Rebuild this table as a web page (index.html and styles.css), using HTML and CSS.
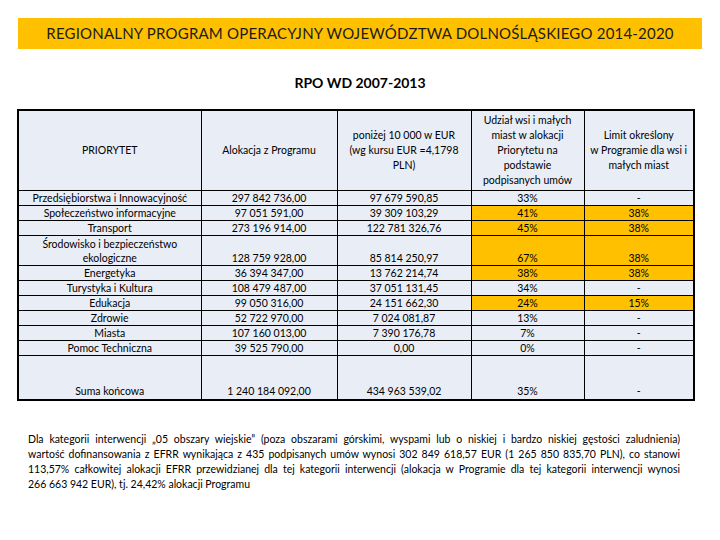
FILE: index.html
```html
<!DOCTYPE html>
<html lang="pl">
<head>
<meta charset="utf-8">
<link rel="stylesheet" href="styles.css">
</head>
<body>
<div class="page">
  <div class="banner">REGIONALNY PROGRAM OPERACYJNY WOJEWÓDZTWA DOLNOŚLĄSKIEGO 2014-2020</div>
  <div class="subtitle">RPO WD 2007-2013</div>
  <table class="data">
    <colgroup>
      <col class="c1"><col class="c2"><col class="c3"><col class="c4"><col class="c5">
    </colgroup>
    <thead>
      <tr class="head">
        <th>PRIORYTET</th>
        <th>Alokacja z Programu</th>
        <th>poniżej 10 000 w EUR<br>(wg kursu EUR =4,1798<br>PLN)</th>
        <th>Udział wsi i małych<br>miast w alokacji<br>Priorytetu na<br>podstawie<br>podpisanych umów</th>
        <th>Limit określony<br>w Programie dla wsi i<br>małych miast</th>
      </tr>
    </thead>
    <tbody>
      <tr><td>Przedsiębiorstwa i Innowacyjność</td><td>297 842 736,00</td><td>97 679 590,85</td><td>33%</td><td>-</td></tr>
      <tr><td>Społeczeństwo informacyjne</td><td>97 051 591,00</td><td>39 309 103,29</td><td class="hl">41%</td><td class="hl">38%</td></tr>
      <tr><td>Transport</td><td>273 196 914,00</td><td>122 781 326,76</td><td class="hl">45%</td><td class="hl">38%</td></tr>
      <tr class="tall"><td>Środowisko i bezpieczeństwo<br>ekologiczne</td><td>128 759 928,00</td><td>85 814 250,97</td><td class="hl">67%</td><td class="hl">38%</td></tr>
      <tr><td>Energetyka</td><td>36 394 347,00</td><td>13 762 214,74</td><td class="hl">38%</td><td class="hl">38%</td></tr>
      <tr><td>Turystyka i Kultura</td><td>108 479 487,00</td><td>37 051 131,45</td><td>34%</td><td>-</td></tr>
      <tr><td>Edukacja</td><td>99 050 316,00</td><td>24 151 662,30</td><td class="hl">24%</td><td class="hl">15%</td></tr>
      <tr><td>Zdrowie</td><td>52 722 970,00</td><td>7 024 081,87</td><td>13%</td><td>-</td></tr>
      <tr><td>Miasta</td><td>107 160 013,00</td><td>7 390 176,78</td><td>7%</td><td>-</td></tr>
      <tr class="last"><td>Pomoc Techniczna</td><td>39 525 790,00</td><td>0,00</td><td>0%</td><td>-</td></tr>
      <tr class="sum"><td>Suma końcowa</td><td>1 240 184 092,00</td><td>434 963 539,02</td><td>35%</td><td>-</td></tr>
    </tbody>
  </table>
  <div class="note">
    <div class="line">Dla kategorii interwencji „05 obszary wiejskie” (poza obszarami górskimi, wyspami lub o niskiej i bardzo niskiej gęstości zaludnienia)</div>
    <div class="line">wartość dofinansowania z EFRR wynikająca z 435 podpisanych umów wynosi 302 849 618,57 EUR (1 265 850 835,70 PLN), co stanowi</div>
    <div class="line">113,57% całkowitej alokacji EFRR przewidzianej dla tej kategorii interwencji (alokacja w Programie dla tej kategorii interwencji wynosi</div>
    <div class="line end">266 663 942 EUR), tj. 24,42% alokacji Programu</div>
  </div>
</div>
</body>
</html>
```

FILE: styles.css
```css
html, body {
  margin: 0;
  padding: 0;
  background: #ffffff;
}

.page {
  width: 720px;
  height: 540px;
  font-family: Lato, "Open Sans", "Liberation Sans", sans-serif;
  color: #000;
  padding-top: 18px;
  box-sizing: border-box;
}

.banner {
  margin: 0 18px;
  height: 31px;
  background: #ffc000;
  color: #1c1c1c;
  font-size: 15px;
  letter-spacing: 0.2px;
  line-height: 31px;
  text-align: center;
}

.subtitle {
  margin-top: 24px;
  text-align: center;
  font-weight: bold;
  font-size: 14px;
  line-height: 20px;
}

.data {
  margin: 16px 0 0 17px;
  border-collapse: collapse;
  table-layout: fixed;
  width: 676px;
  border: 2px solid #000;
  font-size: 10.5px;
}

.c1 { width: 183px; }
.c2 { width: 136px; }
.c3 { width: 134px; }
.c4 { width: 113px; }
.c5 { width: 110px; }

.data th,
.data td {
  border: 1px solid #000;
  background: #e9eef6;
  text-align: center;
  padding: 0;
  font-weight: normal;
  line-height: 14px;
  white-space: nowrap;
}

.data th {
  height: 79px;
  vertical-align: middle;
  line-height: 15px;
}

.data td {
  height: 14px;
  vertical-align: bottom;
}

.data tr.tall td {
  height: 29px;
}

.data tr.sum td {
  height: 42px;
  padding-bottom: 1px;
}

.data td.hl {
  background: #ffc000;
}

.note {
  margin: 31px 40px 0 28px;
  font-size: 10.5px;
  line-height: 15px;
}

.note .line {
  text-align: justify;
  text-align-last: justify;
  white-space: nowrap;
}

.note .line.end {
  text-align-last: left;
}
```
